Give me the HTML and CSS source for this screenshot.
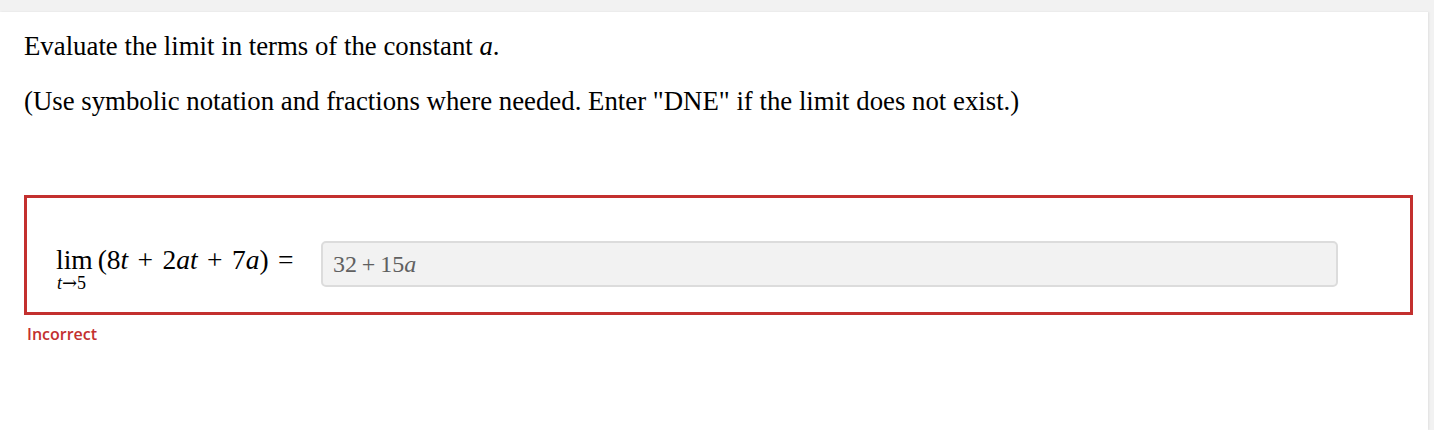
FILE: index.html
```html
<!DOCTYPE html>
<html lang="en">
<head>
<meta charset="UTF-8">
<title>Limit question</title>
<link rel="stylesheet" href="styles.css">
</head>
<body>
<div class="question-card">
  <p class="prompt">Evaluate the limit in terms of the constant <i>a</i>.</p>
  <p class="prompt">(Use symbolic notation and fractions where needed. Enter "DNE" if the limit does not exist.)</p>

  <div class="answer-box">
    <div class="math">
      <span class="lim">
        <span class="lim-word">lim</span>
        <span class="lim-sub"><i>t</i><span class="arrow">→</span>5</span>
      </span>
      <span class="expr">(8<i>t</i> + 2<i>at</i> + 7<i>a</i>) =</span>
    </div>
    <div class="answer-input">32&#8201;+&#8201;15<i>a</i></div>
  </div>
  <div class="feedback">Incorrect</div>
</div>
</body>
</html>
```

FILE: styles.css
```css
body {
  margin: 0;
  background-color: #f2f2f2;
  height: 430px;
  overflow: hidden;
}
.question-card {
  background-color: white;
  margin: 12px 6px 0 0;
  padding: 19px 15px 0 24px;
  height: 418px;
  box-sizing: border-box;
  box-shadow: 1px 0 2px rgba(0, 0, 0, 0.08);
  font-family: "Liberation Serif", "Times New Roman", serif;
  color: #000;
}
.prompt {
  font-size: 26.8px;
  line-height: 30px;
  margin: 0 0 25px 0;
}
.answer-box {
  margin-top: 79px;
  border: 3px solid #c3302f;
  height: 120px;
  box-sizing: border-box;
  display: flex;
  align-items: flex-start;
  padding: 43px 72px 0 29px;
}
.math {
  display: flex;
  align-items: flex-start;
  font-size: 27.5px;
  margin: 4px 0 0 0;
  width: 265px;
}
.lim {
  display: inline-flex;
  flex-direction: column;
  align-items: flex-start;
  margin-right: 5px;
}
.lim-word {
  line-height: 30px;
}
.lim-sub {
  font-size: 18px;
  line-height: 16px;
  padding-left: 1px;
}
.arrow {
  font-family: "DejaVu Serif", serif;
  font-size: 18px;
}
.expr {
  line-height: 30px;
  word-spacing: 2.5px;
}
.answer-input {
  flex: 1;
  height: 46px;
  box-sizing: border-box;
  border: 2px solid #dcdcdc;
  border-radius: 5px;
  background-color: #f2f2f2;
  color: #606060;
  font-size: 24px;
  padding: 0 10px;
  display: flex;
  align-items: center;
}
.feedback {
  font-family: "Open Sans", "Noto Sans", sans-serif;
  font-weight: 600;
  font-size: 16px;
  color: #c3302f;
  margin: 8px 0 0 3px;
}
```
